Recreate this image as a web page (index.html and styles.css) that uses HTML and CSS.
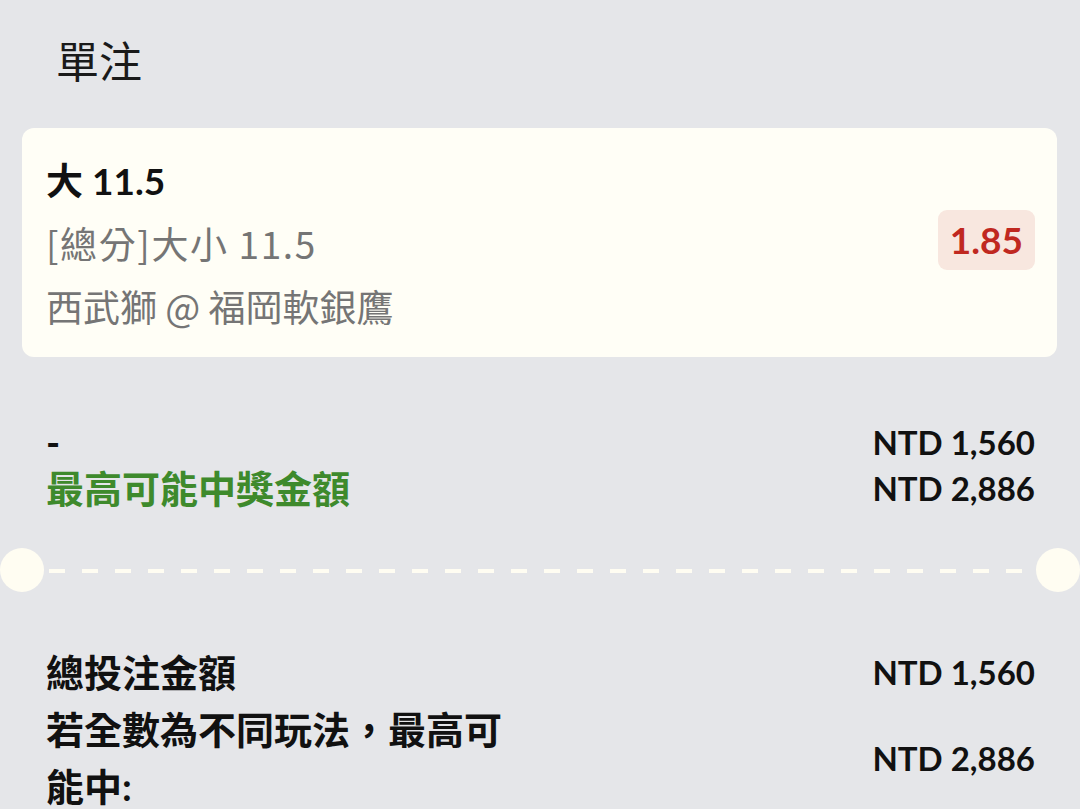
FILE: index.html
```html
<!DOCTYPE html>
<html lang="zh-Hant">
<head>
    <meta charset="UTF-8">
    <meta name="viewport" content="width=device-width, initial-scale=1.0">
    <title>單注</title>
    <link rel="stylesheet" href="styles.css">
</head>
<body>
    <div class="slip">
        <h1 class="slip-title">單注</h1>

        <!-- 投注項目 -->
        <div class="bet-card">
            <div class="bet-info">
                <div class="bet-pick">大 11.5</div>
                <div class="bet-market">[總分]大小 11.5</div>
                <div class="bet-match">西武獅 @ 福岡軟銀鷹</div>
            </div>
            <div class="bet-odds">1.85</div>
        </div>

        <div class="stake">
            <div class="row">
                <span class="label">-</span>
                <span class="value">NTD 1,560</span>
            </div>
            <div class="row">
                <span class="label win">最高可能中獎金額</span>
                <span class="value">NTD 2,886</span>
            </div>
        </div>

        <!-- 票根分隔線 -->
        <div class="ticket-divider">
            <span class="notch"></span>
            <span class="dashes"></span>
            <span class="notch"></span>
        </div>

        <div class="summary">
            <div class="row">
                <span class="label">總投注金額</span>
                <span class="value">NTD 1,560</span>
            </div>
            <div class="row">
                <span class="label">若全數為不同玩法，最高可能中:</span>
                <span class="value">NTD 2,886</span>
            </div>
        </div>
    </div>
</body>
</html>
```

FILE: styles.css
```css
/* 全体 */
body {
    margin: 0;
    padding: 0;
    background-color: #e5e6e9;
    color: #111111;
    font-family: 'Lato', 'Noto Sans CJK TC', sans-serif;
}

.slip {
    width: 1080px;
    overflow: hidden;
}

.slip-title {
    margin: 0;
    padding: 34px 56px 0;
    font-size: 43px;
    font-weight: 400;
    line-height: 56px;
    color: #1a1a1a;
}

/* 投注カード */
.bet-card {
    margin: 38px 23px 0 22px;
    padding: 21px 22px 19px 24px;
    background: #fffef6;
    border-radius: 12px;
    display: flex;
    align-items: center;
    justify-content: space-between;
}

.bet-info {
    font-size: 37px;
    line-height: 63px;
}

.bet-pick {
    font-weight: 700;
    color: #111111;
}

.bet-market,
.bet-match {
    font-family: 'Noto Sans CJK TC', 'Noto Sans', sans-serif;
    color: #757575;
}

.bet-market {
    letter-spacing: 1.6px;
}

.bet-odds {
    margin-bottom: 8px;
    padding: 0 12px;
    height: 60px;
    line-height: 60px;
    font-size: 37px;
    font-weight: 700;
    color: #c0281f;
    background: #f8e7df;
    border-radius: 9px;
}

/* 金額行 */
.row {
    display: flex;
    align-items: center;
    justify-content: space-between;
    font-weight: 700;
}

.label {
    max-width: 480px;
    font-size: 38px;
}

.value {
    font-size: 33px;
}

.stake {
    margin: 62px 45px 0 46px;
    line-height: 46px;
}

.win {
    color: #3e8a2c;
}

/* 分隔線 */
.ticket-divider {
    margin-top: 37px;
    display: flex;
    align-items: center;
}

.notch {
    flex: none;
    width: 44px;
    height: 44px;
    border-radius: 50%;
    background: #fffdf2;
}

.dashes {
    flex: 1;
    height: 4px;
    margin: 2px 5px 0;
    background: repeating-linear-gradient(90deg, #fffdf2 0 16px, transparent 16px 33px);
}

.summary {
    margin: 52px 45px 0 46px;
    line-height: 57px;
}
```
